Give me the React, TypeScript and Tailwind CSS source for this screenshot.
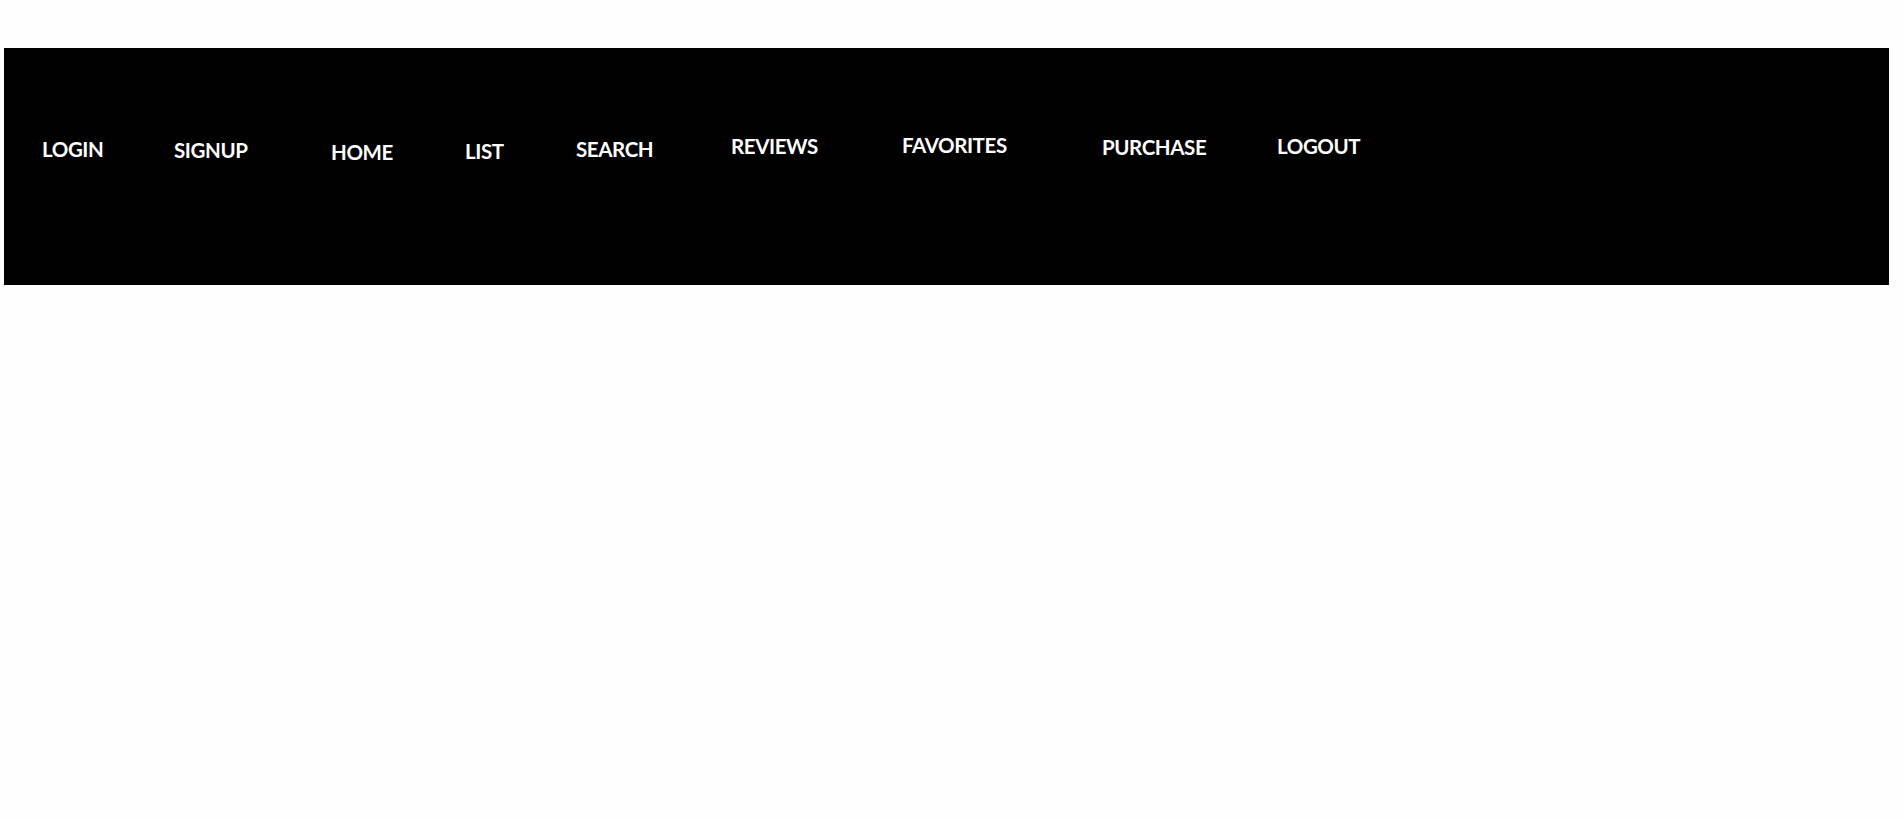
const items = [
    { label: "LOGIN", slot: "w-[132px]", offset: "mt-[4px]" },
    { label: "SIGNUP", slot: "w-[157px]", offset: "mt-[5px]" },
    { label: "HOME", slot: "w-[134px]", offset: "mt-[7px]" },
    { label: "LIST", slot: "w-[111px]", offset: "mt-[6px]" },
    { label: "SEARCH", slot: "w-[155px]", offset: "mt-[4px]" },
    { label: "REVIEWS", slot: "w-[171px]", offset: "mt-[1px]" },
    { label: "FAVORITES", slot: "w-[200px]", offset: "mt-0" },
    { label: "PURCHASE", slot: "w-[175px]", offset: "mt-[2px]" },
    { label: "LOGOUT", slot: "w-[120px]", offset: "mt-[1px]" },
];

const App = () => {
    return (
        <div className="min-h-screen bg-[#fefefe] pt-[48px] pl-[4px]" style={{ fontFamily: "Lato, 'Open Sans', sans-serif" }}>
            <nav className="w-[1885px] h-[237px] bg-black flex items-start pt-[87px] pl-[38px]">
                {items.map((item) => (
                    <div key={item.label} className={`${item.slot} ${item.offset}`}>
                        <a href="#" className="text-white font-bold text-[20.5px] tracking-[-0.4px] leading-none">
                            {item.label}
                        </a>
                    </div>
                ))}
            </nav>
        </div>
    );
};

export default App;
